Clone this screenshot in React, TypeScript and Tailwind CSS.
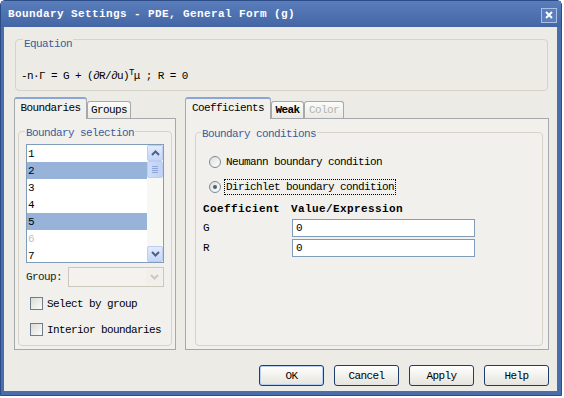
import React from 'react';

// 공통 폰트 (SimSun 비트맵 폰트 대신 고정폭 6px)
const txt = "font-['Liberation_Mono','DejaVu_Sans_Mono',monospace] text-[11px] leading-[12px] tracking-[-0.6px]";
const bold = "font-['Liberation_Mono','DejaVu_Sans_Mono',monospace] text-[11px] leading-[12px] font-bold tracking-[0.4px]";

const PANEL_BG = 'bg-[#f1f0ec]';

const Chevron: React.FC<{ up?: boolean; color?: string }> = ({ up, color = '#4d6185' }) => (
  <svg width="9" height="6" viewBox="0 0 9 6">
    <polyline
      points={up ? '1,5 4.5,1.5 8,5' : '1,1 4.5,4.5 8,1'}
      fill="none"
      stroke={color}
      strokeWidth="2"
    />
  </svg>
);

const ScrollBtn: React.FC<{ up?: boolean }> = ({ up }) => (
  <div className="w-[16px] h-[16px] flex items-center justify-center rounded-[2px] border border-[#bccdf1] bg-gradient-to-b from-[#e3ebfd] to-[#c4d5f7]">
    <Chevron up={up} />
  </div>
);

const Tab: React.FC<{ label: string; width: string; active?: boolean; disabled?: boolean; strong?: boolean }> = ({
  label,
  width,
  active,
  disabled,
  strong,
}) => (
  <div
    className={`${width} flex items-center justify-center border border-[#a5a9ab] rounded-t-[3px] ${
      active
        ? `h-[22px] -mb-px border-b-0 border-t-[#8aa6d6] border-t-2 ${PANEL_BG} pb-[3px]`
        : 'h-[17px] bg-gradient-to-b from-[#fbfbf9] to-[#ebeae5] border-b-0'
    }`}
  >
    <span className={`${strong ? bold.replace('tracking-[0.4px]', 'tracking-[-0.6px]') : txt} ${disabled ? 'text-[#b5b3ad]' : 'text-black'}`}>
      {label}
    </span>
  </div>
);

const CheckBox: React.FC<{ label: string; className?: string }> = ({ label, className }) => (
  <div className={`flex items-center ml-[11px] ${className}`}>
    <div className="w-[13px] h-[13px] border border-[#6f7c8c] bg-gradient-to-br from-[#dcdcd6] to-[#fbfbf9]" />
    <span className={`${txt} ml-[4px] text-black`}>{label}</span>
  </div>
);

const Radio: React.FC<{ label: string; checked?: boolean; focused?: boolean; className?: string }> = ({
  label,
  checked,
  focused,
  className,
}) => (
  <div className={`flex items-center h-[16px] ml-[13px] ${className}`}>
    <div className="w-[12px] h-[12px] rounded-full border border-[#7d8896] bg-gradient-to-br from-[#dedfdb] to-[#ffffff] flex items-center justify-center">
      {checked && <div className="w-[4px] h-[4px] rounded-full bg-[#4b5e80]" />}
    </div>
    <span
      className={`${txt} ml-[3px] text-black px-[1px] h-[16px] flex items-center ${
        focused ? 'border border-dotted border-black' : 'border border-transparent'
      }`}
    >
      {label}
    </span>
  </div>
);

const Button: React.FC<{ label: string; isDefault?: boolean }> = ({ label, isDefault }) => (
  <div
    className={`w-[65px] h-[21px] flex items-center justify-center rounded-[3px] border border-[#1f3c6a] bg-gradient-to-b from-[#ffffff] to-[#e5e4dd] ${
      isDefault ? 'shadow-[inset_0_0_0_1px_#b9d1f4]' : ''
    }`}
  >
    <span className={`${txt} text-black`}>{label}</span>
  </div>
);

const items = ['1', '2', '3', '4', '5', '6', '7'];
const selected = ['2', '5'];

export default function App() {
  return (
    <div className="w-[564px] h-[398px] bg-white">
      <div className="w-[562px] h-[396px] flex flex-col bg-[#4a6dab] border border-[#2c4c88] rounded-t-[5px]">
        {/* 타이틀 바 */}
        <div className="h-[26px] flex items-center justify-between pl-[7px] pr-[4px] bg-gradient-to-b from-[#5a7dbb] to-[#4466a5]">
          <span className={`${bold} tracking-[-0.2px] text-white`}>Boundary Settings - PDE, General Form (g)</span>
          <div className="w-[16px] h-[15px] mt-[2px] flex items-center justify-center border border-[#a9bfe4] bg-[#5b7ebd]">
            <svg width="8" height="8" viewBox="0 0 8 8">
              <path d="M1 1 L7 7 M7 1 L1 7" stroke="white" strokeWidth="2" />
            </svg>
          </div>
        </div>

        {/* 본문 */}
        <div className="flex-1 ml-[3px] mr-[4px] mb-[4px] bg-[#ecebe6] flex flex-col">
          {/* Equation */}
          <div className="mt-[12px] ml-[11px] mr-[9px] h-[52px] flex flex-col border border-[#d6d4c9] rounded-[4px]">
            <span className={`${txt} self-start -mt-[2px] ml-[7px] px-[1px] bg-[#ecebe6] text-[#3b5c9c]`}>Equation</span>
            <div className={`${txt} mt-[20px] ml-[5px] text-black`}>
              -n·Γ = G + (∂R/∂u)<sup className="text-[9px]">T</sup>μ ; R = 0
            </div>
          </div>

          <div className="flex mt-[6px] ml-[10px] gap-[9px]">
            {/* 왼쪽 탭 */}
            <div className="w-[162px] flex flex-col">
              <div className="h-[21px] flex items-end relative z-10">
                <Tab label="Boundaries" width="w-[73px]" active />
                <Tab label="Groups" width="w-[44px]" />
              </div>
              <div className={`h-[232px] border border-[#a5a9ab] ${PANEL_BG} flex flex-col`}>
                <div className="mt-[12px] ml-[3px] w-[154px] h-[215px] flex flex-col border border-[#d6d4c9] rounded-[4px]">
                  <span className={`${txt} self-start -mt-[5px] ml-[6px] px-[1px] ${PANEL_BG} text-[#3b5c9c]`}>
                    Boundary selection
                  </span>
                  <div className="mt-[5px] ml-[7px] w-[138px] h-[119px] border border-[#7f9db9] bg-white flex overflow-hidden">
                    <div className="flex-1 flex flex-col">
                      {items.map((it) => (
                        <div
                          key={it}
                          className={`h-[17px] shrink-0 flex items-center pl-[1px] ${
                            selected.includes(it) ? 'bg-[#97b3da]' : ''
                          }`}
                        >
                          <span className={`${txt} ${it === '6' ? 'text-[#c2c2c2]' : 'text-black'}`}>{it}</span>
                        </div>
                      ))}
                    </div>
                    <div className="w-[16px] flex flex-col justify-between bg-[#f7f7f4]">
                      <div className="flex flex-col">
                        <ScrollBtn up />
                        <div className="w-[16px] h-[17px] rounded-[2px] border border-[#bccdf1] bg-gradient-to-r from-[#cfdcfa] to-[#bfd1f6] flex flex-col items-center justify-center gap-[1px]">
                          {[0, 1, 2, 3].map((i) => (
                            <div key={i} className="w-[6px] h-px bg-[#8ea6d6]" />
                          ))}
                        </div>
                      </div>
                      <ScrollBtn />
                    </div>
                  </div>

                  <div className="mt-[4px] ml-[7px] h-[20px] flex items-center">
                    <span className={`${txt} w-[42px] text-[#222]`}>Group:</span>
                    <div className="w-[96px] h-[20px] border border-[#cbc8bb] bg-[#f3f2ee] flex justify-end items-center pr-px">
                      <div className="w-[16px] h-[16px] flex items-center justify-center rounded-[2px] bg-[#f0efea]">
                        <Chevron color="#c9c8c2" />
                      </div>
                    </div>
                  </div>

                  <CheckBox label="Select by group" className="mt-[10px]" />
                  <CheckBox label="Interior boundaries" className="mt-[13px]" />
                </div>
              </div>
            </div>

            {/* 오른쪽 탭 */}
            <div className="w-[364px] flex flex-col">
              <div className="h-[21px] flex items-end relative z-10">
                <Tab label="Coefficients" width="w-[86px]" active />
                <Tab label="Weak" width="w-[33px]" strong />
                <Tab label="Color" width="w-[40px]" disabled />
              </div>
              <div className={`h-[232px] border border-[#a5a9ab] ${PANEL_BG} flex flex-col`}>
                <div className="mt-[13px] ml-[9px] w-[348px] h-[214px] flex flex-col border border-[#d6d4c9] rounded-[4px]">
                  <span className={`${txt} self-start -mt-[5px] ml-[5px] px-[1px] ${PANEL_BG} text-[#3b5c9c]`}>
                    Boundary conditions
                  </span>
                  <Radio label="Neumann boundary condition" className="mt-[14px]" />
                  <Radio label="Dirichlet boundary condition" checked focused className="mt-[9px]" />

                  <div className="mt-[8px] ml-[7px] flex text-black">
                    <span className={`${bold} w-[88px]`}>Coefficient</span>
                    <span className={bold}>Value/Expression</span>
                  </div>
                  {['G', 'R'].map((c, i) => (
                    <div key={c} className={`${i === 0 ? 'mt-[4px]' : 'mt-[2px]'} ml-[7px] h-[18px] flex items-center`}>
                      <span className={`${txt} w-[89px] text-black`}>{c}</span>
                      <div className="w-[183px] h-[18px] border border-[#7f9db9] bg-white flex items-center pl-[3px]">
                        <span className={`${txt} text-black`}>0</span>
                      </div>
                    </div>
                  ))}
                </div>
              </div>
            </div>
          </div>

          {/* 버튼 */}
          <div className="mt-[15px] mr-[8px] flex justify-end gap-[10px]">
            <Button label="OK" isDefault />
            <Button label="Cancel" />
            <Button label="Apply" />
            <Button label="Help" />
          </div>
        </div>
      </div>
    </div>
  );
}
